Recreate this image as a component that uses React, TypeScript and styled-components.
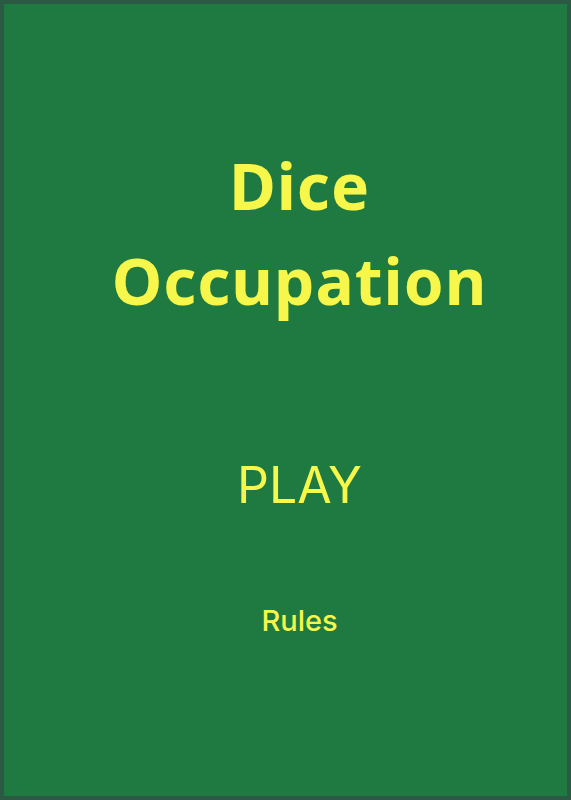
import React from 'react';
import styled, { createGlobalStyle } from 'styled-components';

const GlobalStyle = createGlobalStyle`
  html, body {
    margin: 0;
    padding: 0;
  }
  * {
    box-sizing: border-box;
  }
`;

// Main menu screen for the dice game
const Screen = styled.div`
  height: 100vh;
  background: #1e7a41;
  border: 4px solid #2b5944;
  display: flex;
  flex-direction: column;
  align-items: center;
  padding: 134px 0 0 28px;
  color: #f7f64a;
`;

const Title = styled.h1`
  margin: 0;
  font-family: 'Noto Sans', 'DejaVu Sans', sans-serif;
  font-weight: 700;
  font-size: 64px;
  line-height: 95px;
  letter-spacing: 1px;
  text-align: center;
`;

const MenuButton = styled.button<{ $size: number; $weight?: number }>`
  background: none;
  border: none;
  color: inherit;
  cursor: pointer;
  padding: 0;
  font-family: 'Inter', 'Roboto', sans-serif;
  font-weight: ${(p) => p.$weight ?? 400};
  font-size: ${(p) => p.$size}px;
  line-height: 1;
`;

const Menu = styled.div`
  display: flex;
  flex-direction: column;
  align-items: center;
  gap: 96px;
  margin-top: 132px;
`;

export default function App() {
  return (
    <>
      <GlobalStyle />
      <Screen>
        <Title>
          Dice
          <br />
          Occupation
        </Title>
        <Menu>
          <MenuButton $size={50}>PLAY</MenuButton>
          <MenuButton $size={29} $weight={500}>
            Rules
          </MenuButton>
        </Menu>
      </Screen>
    </>
  );
}
